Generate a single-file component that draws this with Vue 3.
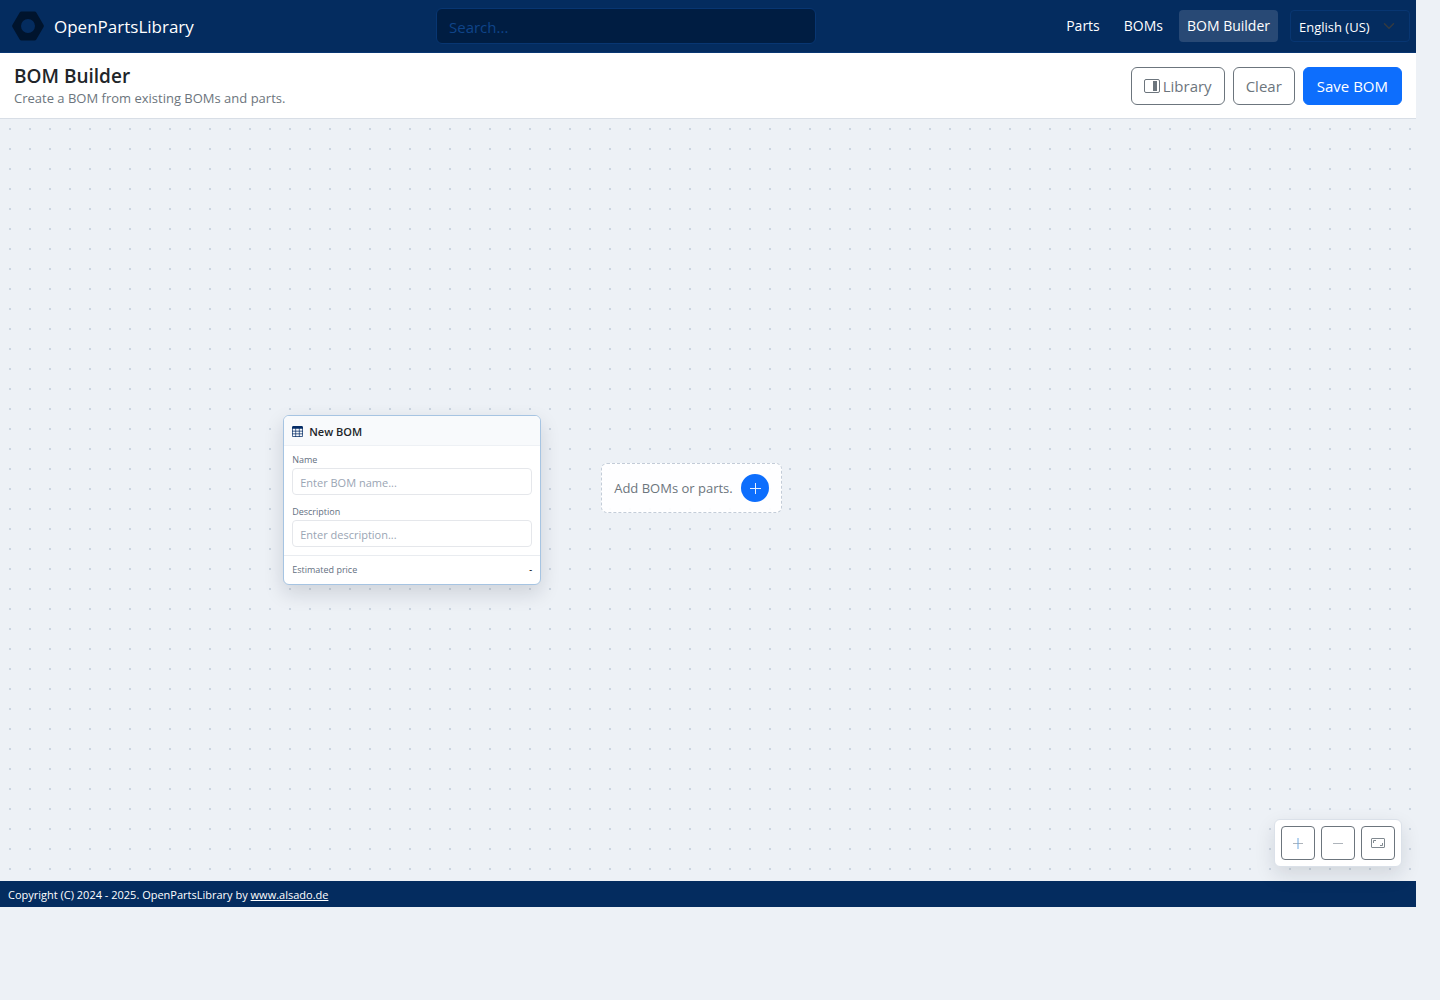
<script setup>
import { ref } from 'vue'

const query = ref('')
const language = ref('English (US)')
const bomName = ref('')
const bomDescription = ref('')
const links = [
  { label: 'Parts', active: false },
  { label: 'BOMs', active: false },
  { label: 'BOM Builder', active: true },
]
</script>

<template>
  <div class="page">
    <header class="topbar">
      <a class="brand" href="#">
        <svg class="logo" viewBox="0 0 32 30" aria-hidden="true">
          <path fill-rule="evenodd" d="M9.5.5h13q1.200 0 1.800 1L31.600 14q.5 1 0 2l-7.300 12.500q-.6 1-1.800 1h-13q-1.200 0-1.800-1L.4 16q-.5-1 0-2L7.700 1.500q.6-1 1.800-1zM16 8a7 7 0 1 0 0 14 7 7 0 0 0 0-14z" />
        </svg>
        <span>OpenPartsLibrary</span>
      </a>
      <input v-model="query" class="search" type="search" placeholder="Search..." aria-label="Search" />
      <nav class="menu">
        <a v-for="link in links" :key="link.label" href="#" :class="{ active: link.active }">{{ link.label }}</a>
        <div class="language">
          <select v-model="language" aria-label="Language">
            <option>English (US)</option>
          </select>
          <svg viewBox="0 0 16 16" aria-hidden="true"><path d="M2 5l6 6 6-6" /></svg>
        </div>
      </nav>
    </header>

    <section class="toolbar">
      <div class="heading">
        <h1>BOM Builder</h1>
        <p>Create a BOM from existing BOMs and parts.</p>
      </div>
      <div class="actions">
        <button type="button" class="btn">
          <svg viewBox="0 0 16 16" aria-hidden="true">
            <rect x=".5" y="1.500" width="15" height="13" rx="1.500" fill="none" stroke="currentColor" />
            <rect x="9" y="3" width="4" height="10" fill="currentColor" />
          </svg>
          Library
        </button>
        <button type="button" class="btn">Clear</button>
        <button type="button" class="btn primary">Save BOM</button>
      </div>
    </section>

    <main class="canvas">
      <article class="node">
        <h2>
          <svg viewBox="0 0 16 16" aria-hidden="true">
            <path fill-rule="evenodd" d="M0 2a2 2 0 0 1 2-2h12a2 2 0 0 1 2 2v12a2 2 0 0 1-2 2H2a2 2 0 0 1-2-2zm15 2h-4v3h4zm0 4h-4v3h4zm0 4h-4v3h3a1 1 0 0 0 1-1zm-5 3v-3H6v3zm-5 0v-3H1v2a1 1 0 0 0 1 1zm-4-4h4V8H1zm0-4h4V4H1zm5-3v3h4V4zm4 4H6v3h4z" />
          </svg>
          New BOM
        </h2>
        <div class="fields">
          <label for="bom-name">Name</label>
          <input id="bom-name" v-model="bomName" type="text" placeholder="Enter BOM name..." />
          <label for="bom-description">Description</label>
          <input id="bom-description" v-model="bomDescription" type="text" placeholder="Enter description..." />
        </div>
        <div class="price"><span>Estimated price</span><strong>-</strong></div>
      </article>

      <div class="add">
        <span>Add BOMs or parts.</span>
        <button type="button" aria-label="Add">
          <svg viewBox="0 0 16 16" aria-hidden="true"><path d="M8.500 3v11M3 8.500h11" /></svg>
        </button>
      </div>

      <div class="zoom">
        <button type="button" aria-label="Zoom in">
          <svg viewBox="0 0 16 16" aria-hidden="true"><path d="M3 8.500h10" /><path d="M8 3v11" stroke="#6fa8e0" /></svg>
        </button>
        <button type="button" aria-label="Zoom out">
          <svg viewBox="0 0 16 16" aria-hidden="true"><path d="M3 8.500h10" /></svg>
        </button>
        <button type="button" aria-label="Fit to view">
          <svg class="fit" viewBox="0 0 16 16" aria-hidden="true">
            <rect x="1.500" y="3.500" width="13" height="9" rx=".5" />
            <path d="M3.500 8V5.500H6M12.500 8v2.500H10" />
          </svg>
        </button>
      </div>
    </main>

    <footer class="footer">Copyright (C) 2024 - 2025. OpenPartsLibrary by <a href="#">www.alsado.de</a></footer>
  </div>
</template>

<style>
body {
  background: #edf1f6;
}
</style>

<style scoped>
.page,
.page * {
  box-sizing: border-box;
}
.page {
  margin-right: 24px;
  font-family: "Open Sans", "Noto Sans", sans-serif;
  color: #212529;
}
input,
select,
button {
  font: inherit;
  margin: 0;
}
svg {
  display: block;
  flex: none;
}
.topbar {
  display: flex;
  justify-content: space-between;
  align-items: center;
  height: 53px;
  padding: 0 6px 0 12px;
  background: #042c5f;
  border-bottom: 1px solid #083672;
}
.brand {
  display: flex;
  align-items: center;
  gap: 10px;
  color: #fff;
  font-size: 17px;
  text-decoration: none;
}
.logo {
  width: 32px;
  height: 30px;
  fill: #00142d;
}
.search {
  appearance: none;
  width: 380px;
  height: 36px;
  padding: 2px 12px 0;
  border: 1px solid #083672;
  border-radius: 6px;
  background: #001d42;
  color: #fff;
  font-size: 15px;
}
.search::placeholder {
  color: #0f4489;
}
.menu {
  display: flex;
  align-items: center;
  justify-content: flex-end;
  gap: 8px;
}
.menu a {
  padding: 0 8px;
  border-radius: 4px;
  color: #fff;
  font-size: 14px;
  line-height: 32px;
  text-decoration: none;
  white-space: nowrap;
}
.menu a.active {
  background: #284975;
}
.language {
  display: grid;
  width: 120px;
  margin-left: 4px;
  align-items: center;
}
.language select,
.language svg {
  grid-area: 1 / 1;
}
.language select {
  appearance: none;
  width: 100%;
  height: 32px;
  padding: 2px 8px 0;
  border: 1px solid #083672;
  border-radius: 4px;
  background: transparent;
  color: #fff;
  font-size: 13px;
}
.language svg {
  justify-self: end;
  width: 12px;
  height: 12px;
  margin-right: 15px;
  fill: none;
  stroke: #343a40;
  stroke-width: 2;
  stroke-linecap: round;
  stroke-linejoin: round;
  pointer-events: none;
}
.toolbar {
  display: flex;
  align-items: center;
  justify-content: space-between;
  height: 66px;
  padding: 0 14px;
  background: #fff;
  border-bottom: 1px solid #d8dee6;
}
h1,
h2,
p {
  margin: 0;
}
h1 {
  font-size: 19px;
  font-weight: 600;
  line-height: 24px;
}
p {
  color: #6c757d;
  font-size: 13px;
  line-height: 20px;
}
.actions {
  display: flex;
  gap: 8px;
}
.btn {
  display: flex;
  align-items: center;
  gap: 3px;
  height: 38px;
  padding: 0 12px;
  border: 1px solid #6c757d;
  border-radius: 6px;
  background: #fff;
  color: #6c757d;
  font-size: 15px;
}
.btn svg {
  width: 16px;
  height: 16px;
}
.btn.primary {
  padding: 0 13px;
  border-color: #0d6efd;
  background: #0d6efd;
  color: #fff;
}
.canvas {
  position: relative;
  height: calc(100vh - 238px);
  min-height: 320px;
  background: radial-gradient(circle, #cbd5e1 1px, transparent 1px) 0 0 / 20px 20px;
}
.node {
  position: absolute;
  top: 50%;
  left: 20%;
  width: 258px;
  transform: translateY(-50%);
  overflow: hidden;
  border: 1px solid #a6c4e2;
  border-radius: 6px;
  background: #fff;
  box-shadow: 0 8px 20px rgba(15, 23, 42, 0.14);
}
h2 {
  display: flex;
  align-items: center;
  gap: 6px;
  height: 30px;
  padding: 1px 8px 0;
  border-bottom: 1px solid #eef1f5;
  background: #f8fafc;
  font-size: 11px;
  font-weight: 600;
}
h2 svg {
  width: 11px;
  height: 11px;
  fill: #042c66;
}
.fields {
  display: flex;
  flex-direction: column;
  padding: 6px 8px 8px;
}
.fields label {
  color: #64707f;
  font-size: 9px;
  line-height: 16px;
}
.fields input {
  width: 100%;
  height: 27px;
  padding: 2px 7px 0;
  border: 1px solid #e5e7eb;
  border-radius: 4px;
  font-size: 11px;
}
.fields input + label {
  margin-top: 9px;
}
.fields input::placeholder {
  color: #9aa5b4;
}
.price {
  display: flex;
  align-items: center;
  justify-content: space-between;
  height: 29px;
  padding: 0 8px 2px;
  border-top: 1px solid #e9ecf0;
  color: #64707f;
  font-size: 9px;
}
.price strong {
  color: #212529;
  font-weight: 600;
}
.add {
  position: absolute;
  top: calc(50% - 37px);
  left: calc(20% + 318px);
  display: flex;
  align-items: center;
  gap: 8px;
  height: 50px;
  padding: 0 12px;
  border: 1px dashed #c3ccd8;
  border-radius: 6px;
  background: rgba(255, 255, 255, 0.92);
  color: #6c757d;
  font-size: 13px;
  white-space: nowrap;
}
.add button {
  display: grid;
  place-items: center;
  width: 28px;
  height: 28px;
  padding: 0;
  border: 0;
  border-radius: 50%;
  background: #0d6efd;
}
.add svg {
  width: 16px;
  height: 16px;
  fill: none;
  stroke: #e8f1ff;
}
.zoom {
  position: absolute;
  right: 14px;
  bottom: 14px;
  display: flex;
  gap: 6px;
  padding: 6px;
  border: 1px solid #dbe1e9;
  border-radius: 6px;
  background: #fff;
  box-shadow: 0 8px 20px rgba(15, 23, 42, 0.12);
}
.zoom button {
  display: grid;
  place-items: center;
  width: 34px;
  height: 34px;
  padding: 0;
  border: 1px solid #6c757d;
  border-radius: 4px;
  background: #fff;
}
.zoom svg {
  width: 16px;
  height: 16px;
  fill: none;
  stroke: #aeb4bb;
}
.zoom .fit {
  stroke: #808990;
}
.footer {
  height: 26px;
  padding: 0 8px;
  background: #042c5f;
  color: #fff;
  font-size: 11px;
  line-height: 28px;
}
.footer a {
  color: inherit;
}
</style>
